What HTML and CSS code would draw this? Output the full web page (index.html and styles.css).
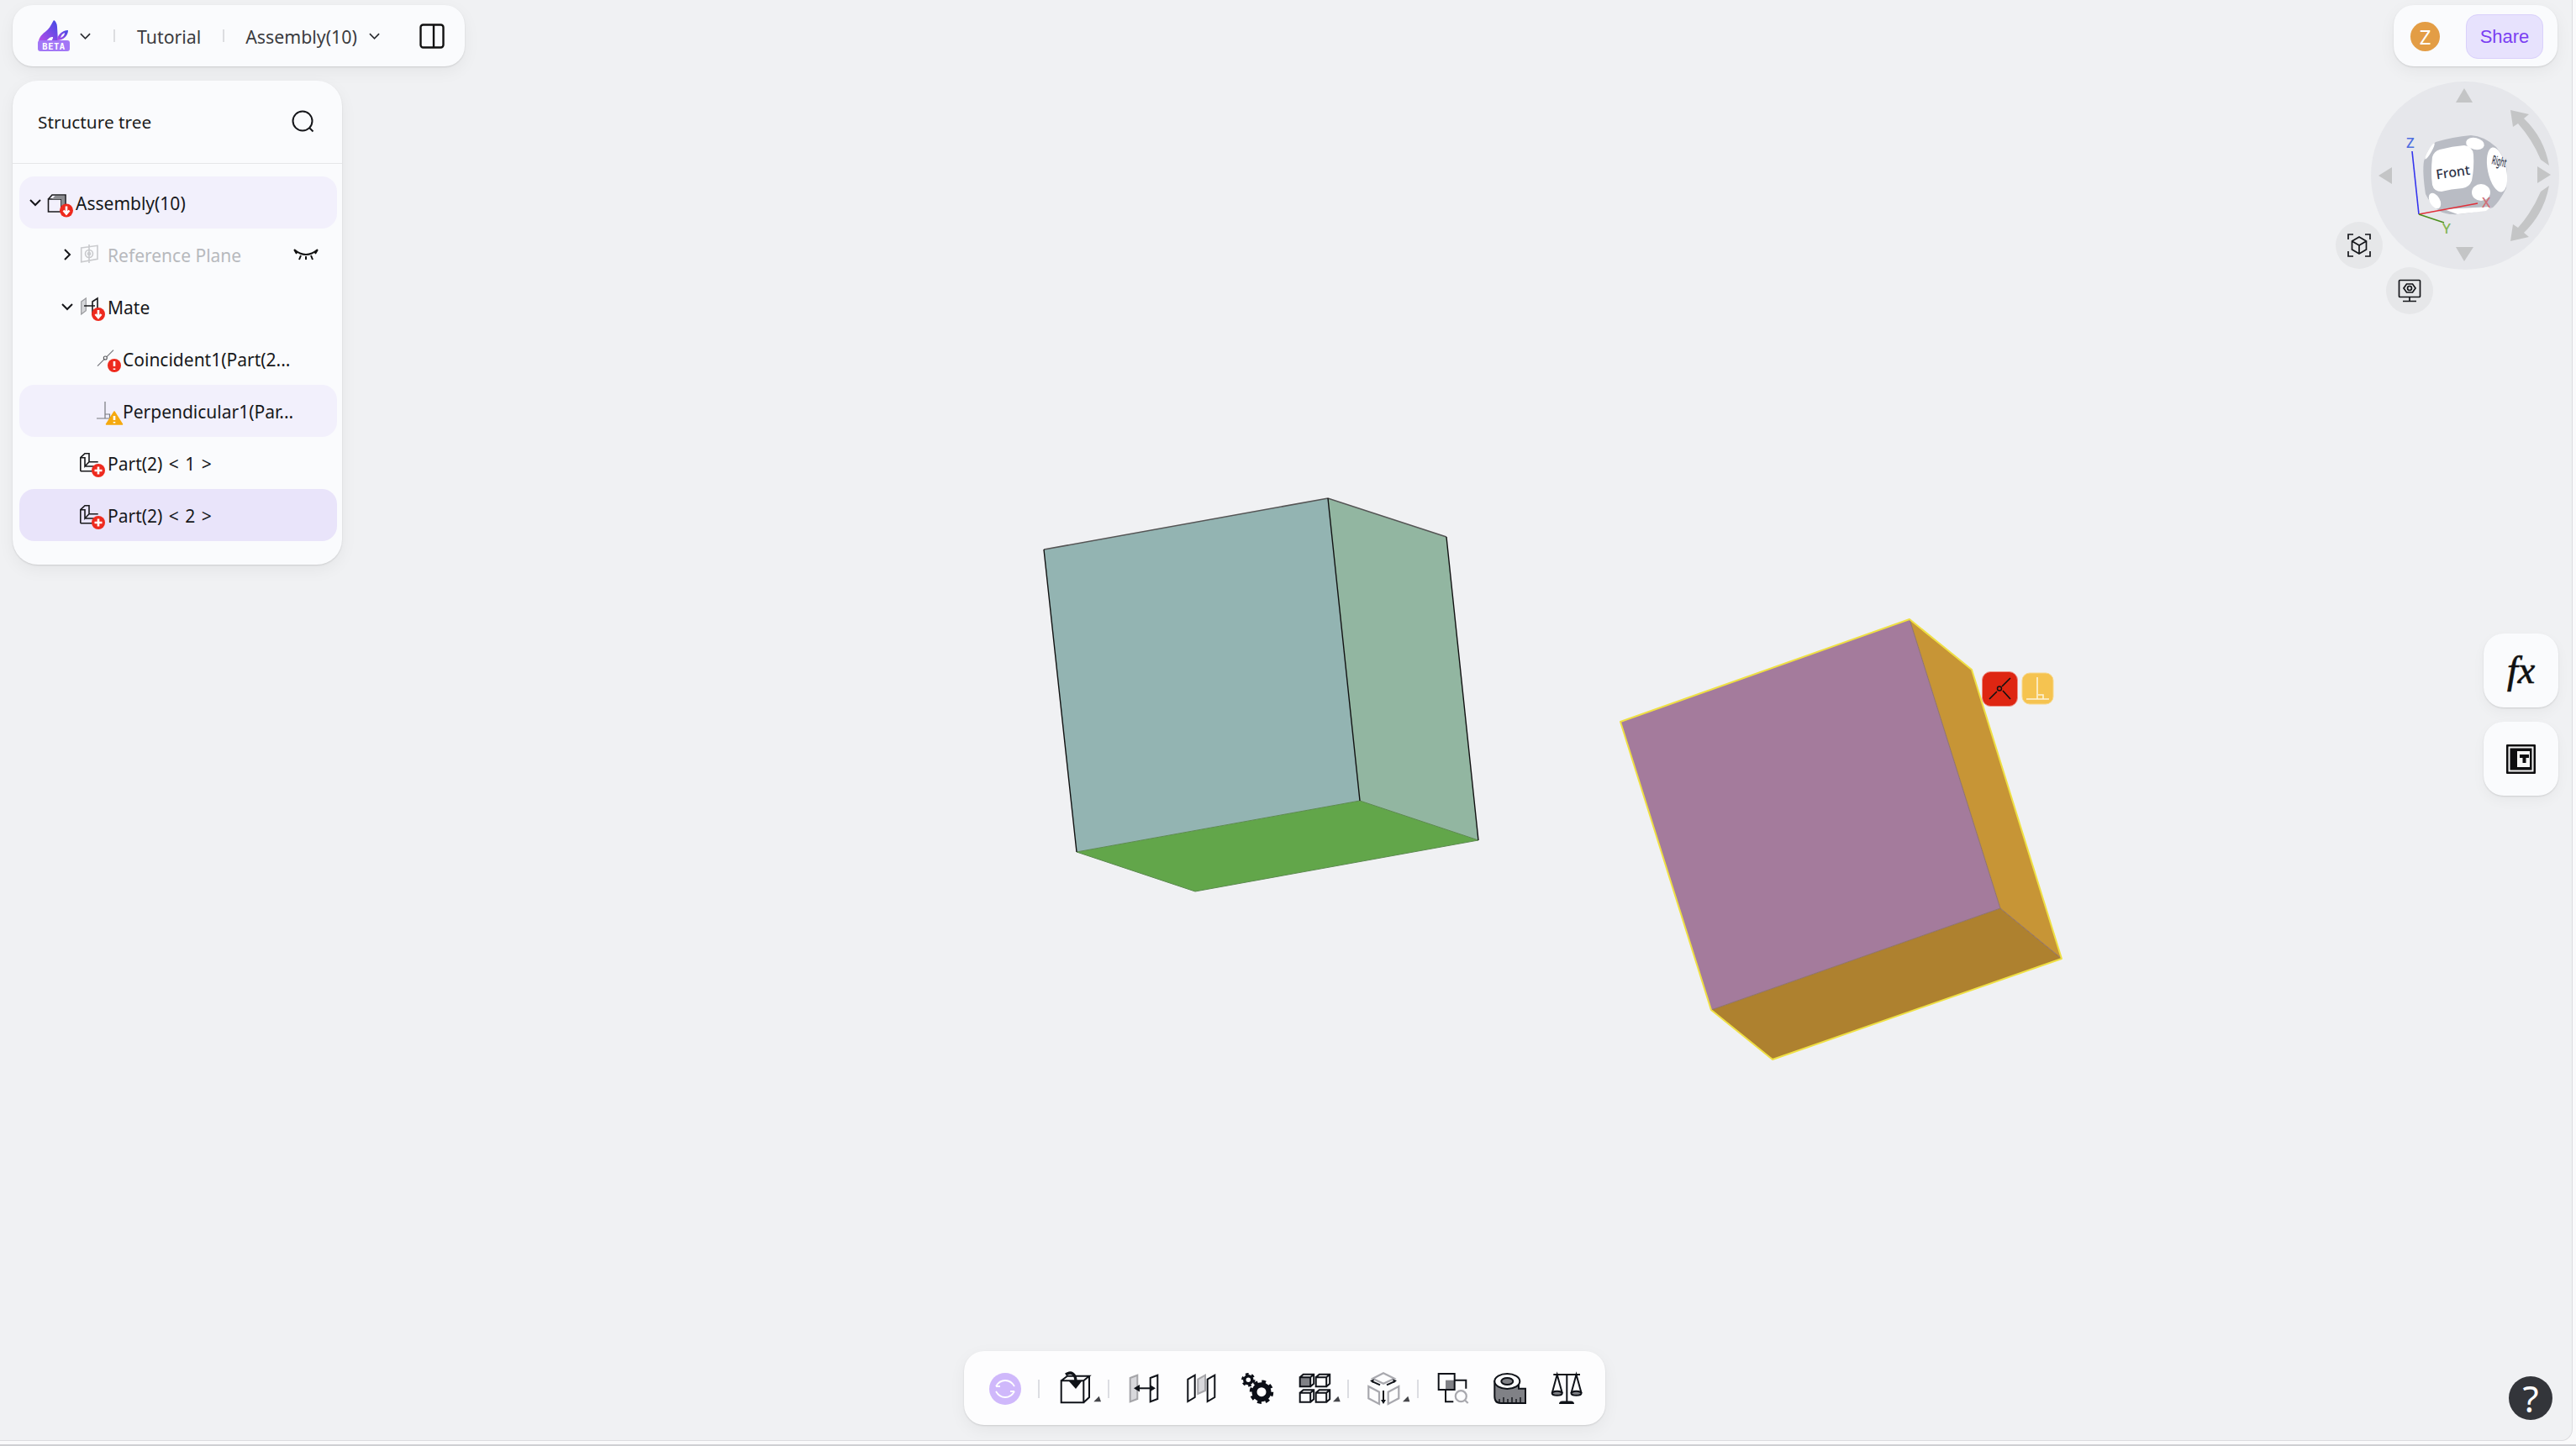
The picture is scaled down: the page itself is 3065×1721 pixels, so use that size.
FILE: index.html
```html
<!DOCTYPE html>
<html lang="en">
<head>
    <meta charset="UTF-8">
    <meta name="viewport" content="width=device-width, initial-scale=1.0">
    <title>Assembly(10)</title>
    <link rel="stylesheet" href="styles.css">
</head>
<body>
<div class="viewport">

    <!-- 3d scene: the two parts, the mate markers and the view cube -->
    <svg class="scene" viewBox="0 0 3065 1721">
        <g class="part-a">
            <polygon class="a-front" points="1242,654 1580,593 1618,953 1281,1014"/>
            <polygon class="a-right" points="1580,593 1721,639 1759,1000 1618,953"/>
            <polygon class="a-bottom" points="1281,1014 1618,953 1759,1000 1422,1061"/>
            <path class="a-top-edge" d="M1242 654L1580 593L1721 639"/>
            <path class="a-edge" d="M1242 654L1281 1014M1580 593L1618 953M1721 639L1759 1000"/>
        </g>
        <g class="part-b">
            <polygon class="b-front" points="1928,859 2272,737 2380,1081 2036,1202"/>
            <polygon class="b-right" points="2272,737 2346,797 2453,1141 2380,1081"/>
            <polygon class="b-bottom" points="2036,1202 2380,1081 2453,1141 2109,1261"/>
            <path class="b-inner" d="M2272 737L2380 1081L2036 1202M2380 1081L2453 1141"/>
            <path class="b-outline" d="M1928 859L2272 737L2346 797L2453 1141L2109 1261L2036 1202Z"/>
        </g>

        <rect class="mark-red" x="2358.5" y="799.5" width="42" height="41" rx="10"/>
        <path class="mark-red-lines" d="M2392 807L2382 817M2376 823L2367 832M2383 822L2392 832"/>
        <circle class="mark-red-dot" cx="2379" cy="819.5" r="2.5"/>
        <rect class="mark-yellow" x="2406" y="801" width="37" height="37" rx="9"/>
        <path class="mark-yellow-lines" d="M2424 806V832M2411 832H2438M2425 827H2431V832"/>

        <circle class="nav-disc" cx="2933" cy="209" r="112"/>
        <circle class="nav-disc-small" cx="2807" cy="292" r="28"/>
        <circle class="nav-disc-small" cx="2867" cy="346" r="28"/>
        <g class="nav-arrow">
            <polygon points="2932,105 2922,122 2942,122"/>
            <polygon points="2922,294 2943,294 2932,311"/>
            <polygon points="2846,199 2846,219 2830,209"/>
            <polygon points="3019,198 3019,218 3035,208"/>
            <path d="M2987 131L3009 136L3003 141Q3027 164 3033 197L3023 190Q3013 166 2996 147L2990 151Z"/>
            <path d="M2987 287L3009 282L3003 277Q3027 254 3033 221L3023 228Q3013 252 2996 271L2990 267Z"/>
        </g>

        <path class="cube-body" d="M2898 169Q2918 163 2940 161Q2956 162 2970 175Q2982 190 2983 205L2982 224Q2974 240 2966 247Q2946 253 2926 255Q2910 256 2902 251Q2890 240 2886 231Q2882 205 2884 192Q2888 177 2898 169Z"/>
        <g class="cube-spot">
            <path d="M2903 178Q2918 174 2932 173Q2942 174 2943 184Q2944 200 2941 215Q2938 223 2930 224Q2916 225 2905 228Q2896 228 2894 220Q2892 205 2894 187Q2896 180 2903 178Z"/>
            <ellipse cx="2971" cy="202" rx="11" ry="27" transform="rotate(-12 2971 202)"/>
            <ellipse cx="2945" cy="171" rx="11" ry="7" transform="rotate(12 2945 171)"/>
            <ellipse cx="2952" cy="229" rx="11" ry="10"/>
            <ellipse cx="2897" cy="239" rx="6" ry="10" transform="rotate(-30 2897 239)"/>
            <ellipse cx="2891" cy="180" rx="2" ry="11" transform="rotate(30 2891 180)"/>
            <path d="M2908 249L2964 246L2958 251L2924 255Z"/>
        </g>
        <text class="cube-front" x="2898" y="211" transform="rotate(-8 2916 204)">Front</text>
        <text class="cube-right" transform="translate(2964 195) rotate(14) scale(.62 1.35)">Right</text>
        <path class="axis-z" d="M2878 255L2870 180"/>
        <path class="axis-x" d="M2878 255L2948 242"/>
        <path class="axis-y" d="M2878 255L2908 265"/>
        <text class="label-z" x="2863" y="176">Z</text>
        <text class="label-x" x="2953" y="247">X</text>
        <text class="label-y" x="2906" y="278">Y</text>

        <g class="nav-icon">
            <path d="M2794 285v-6h6M2814 279h6v6M2820 299v6h-6M2800 305h-6v-6"/>
            <path d="M2807 282l8.500 5v10l-8.500 5l-8.500-5v-10zM2798.500 287l8.500 5l8.500-5M2807 292v10"/>
            <rect x="2854.500" y="333.500" width="25" height="20" rx="1"/>
            <path d="M2867 353v6M2859 358.500h16"/>
            <path d="M2860 343l3.500-5h7l3.500 5l-3.500 5h-7z"/>
            <circle cx="2867" cy="343" r="2.500"/>
        </g>
    </svg>

    <div class="left-col">
        <header class="topbar">
            <svg class="logo" viewBox="0 0 38 37">
                <defs>
                    <linearGradient id="logoGrad" x1="0" y1="1" x2="1" y2="0">
                        <stop offset="0" stop-color="#b64de8"/>
                        <stop offset="1" stop-color="#3f49e4"/>
                    </linearGradient>
                </defs>
                <path fill="url(#logoGrad)" d="M19 0C21 1 23 4 23 8L24 25H16C18 22 19 20 17 20C13 20 12 24 9 25H1C2 18 8 15 12 11C15 8 17 3 19 0Z"/>
                <path fill="url(#logoGrad)" d="M23 24C23 18 29 12 36 12C36 18 31 24 23 24ZM27 21C30 20 32 18 32 15C29 16 28 18 27 21Z"/>
                <rect x="0" y="24" width="38" height="13" rx="3" fill="#a277f6"/>
                <text class="logo-text" x="19" y="34.500">BETA</text>
            </svg>
            <svg class="chev chev-logo" viewBox="0 0 14 8"><path d="M1 1l6 6l6-6"/></svg>
            <span class="bar-sep bar-sep-a"></span>
            <span class="bar-text bar-tutorial">Tutorial</span>
            <span class="bar-sep bar-sep-b"></span>
            <span class="bar-text bar-assembly">Assembly(10)</span>
            <svg class="chev chev-doc" viewBox="0 0 14 8"><path d="M1 1l6 6l6-6"/></svg>
            <svg class="panel-toggle" viewBox="0 0 30 30">
                <rect x="1.500" y="1.500" width="27" height="27" rx="3"/>
                <path d="M17 1.500V28.500"/>
            </svg>
        </header>

        <aside class="tree">
            <div class="tree-head">
                <span class="tree-title">Structure tree</span>
                <svg class="tree-search" viewBox="0 0 28 28">
                    <circle cx="13" cy="13" r="11.500"/>
                    <path d="M21 21l4.500 4.500"/>
                </svg>
            </div>
            <div class="tree-body">
                <div class="row lv0 hover">
                    <svg class="caret" viewBox="0 0 20 20"><path d="M4 7l6 6l6-6"/></svg>
                    <svg class="node" viewBox="0 0 34 34">
                        <path class="ln" d="M1.500 13L6 8H22V24L17 28M1.500 13H17V28H1.500Z"/>
                        <path class="gray" d="M6 13L9.500 9H21V22L17 25V13Z"/>
                        <circle class="bad" cx="23" cy="26.500" r="8"/>
                        <path class="w" d="M23 21.500v8M19.500 26.500l3.500 4l3.500-4"/>
                    </svg>
                    <span class="label">Assembly(10)</span>
                </div>
                <div class="row lv1 muted">
                    <svg class="caret" viewBox="0 0 20 20"><path d="M7 4l6 6l-6 6"/></svg>
                    <svg class="node" viewBox="0 0 34 34">
                        <path class="pale" d="M2.700 9L22 6.300V22.300L2.700 25.700ZM12 5V27"/>
                        <circle class="pale" cx="12" cy="16" r="4.500"/>
                        <circle class="pale" cx="12" cy="16" r="1.500"/>
                    </svg>
                    <span class="label">Reference Plane</span>
                    <svg class="eye" viewBox="0 0 30 16">
                        <path d="M1 2Q15 14 29 2M1 2l3 5M29 2l-3 5M9 9l-2 5M21 9l2 5M15 10v4"/>
                    </svg>
                </div>
                <div class="row lv1">
                    <svg class="caret" viewBox="0 0 20 20"><path d="M4 7l6 6l6-6"/></svg>
                    <svg class="node" viewBox="0 0 34 34">
                        <path class="plane" d="M2.700 11L8.300 7V21.700L2.700 26Z"/>
                        <path class="ln" d="M16 11L22 7V21.700L16 26ZM6 16H19"/>
                        <circle class="bad" cx="23" cy="26" r="8"/>
                        <path class="w" d="M23 21v8M19.500 26l3.500 4l3.500-4"/>
                    </svg>
                    <span class="label">Mate</span>
                </div>
                <div class="row lv2">
                    <span class="caret"></span>
                    <svg class="node" viewBox="0 0 34 34">
                        <path class="thin" d="M4 25.700L23 6.700"/>
                        <circle class="dot" cx="13.300" cy="16" r="2"/>
                        <circle class="bad" cx="24" cy="25" r="8"/>
                        <path class="w" d="M24 20v6M24 28.500v1.500"/>
                    </svg>
                    <span class="label">Coincident1(Part(2...</span>
                </div>
                <div class="row lv2 hover">
                    <span class="caret"></span>
                    <svg class="node" viewBox="0 0 34 34">
                        <path class="thin" d="M13 6V26M3 26H19M13 21H18.500V26"/>
                        <path class="warn" d="M24 18L33.500 33H14.500Z"/>
                        <path class="w" d="M24 23v5M24 30v1.500"/>
                    </svg>
                    <span class="label">Perpendicular1(Par...</span>
                </div>
                <div class="row lv1">
                    <span class="caret"></span>
                    <svg class="node" viewBox="0 0 34 34">
                        <path class="ln" d="M1.800 26.700V10.700L7 5.700H12V15.700H22.700M1.800 10.700H7V21L12 15.700M7 21H20M1.800 26.700H20"/>
                        <circle class="bad" cx="23" cy="26" r="8"/>
                        <path class="w" d="M23 21.500v9M18.500 26h9"/>
                    </svg>
                    <span class="label spaced">Part(2) &lt; 1 &gt;</span>
                </div>
                <div class="row lv1 selected">
                    <span class="caret"></span>
                    <svg class="node" viewBox="0 0 34 34">
                        <path class="ln" d="M1.800 26.700V10.700L7 5.700H12V15.700H22.700M1.800 10.700H7V21L12 15.700M7 21H20M1.800 26.700H20"/>
                        <circle class="bad" cx="23" cy="26" r="8"/>
                        <path class="w" d="M23 21.500v9M18.500 26h9"/>
                    </svg>
                    <span class="label spaced">Part(2) &lt; 2 &gt;</span>
                </div>
            </div>
        </aside>
    </div>

    <div class="user-bar">
        <span class="avatar">Z</span>
        <button class="share" type="button">Share</button>
    </div>

    <div class="side-tools">
        <div class="side-btn"><span class="fx">fx</span></div>
        <div class="side-btn">
            <svg class="side-icon" viewBox="0 0 35 35">
                <rect class="si-black" x="0" y="0" width="35" height="35" rx="1"/>
                <path class="si-white" d="M3.500 3.500H31.500V31.500H3.500Z"/>
                <path class="si-fill" d="M13 8H28V27H13Z"/>
                <path class="si-t" d="M16 12H27V16H23.500V22H19.500V16H16Z"/>
            </svg>
        </div>
    </div>

    <div class="toolbar">
        <svg class="sync" viewBox="0 0 38 38">
            <circle class="sync-bg" cx="19" cy="19" r="19"/>
            <path class="sync-arc" d="M8 16Q12 9 19 9Q26 9 30 16M8 22Q12 29 19 29Q26 29 30 22"/>
            <path class="sync-arc" d="M8 16L13 16M30 22L25 22"/>
        </svg>
        <span class="sep sep-first"></span>
        <svg class="tool tool-import" viewBox="0 0 54 48">
            <path class="st2" d="M5.700 14.300H32.300V40.300H5.700ZM5.700 14.300L13 8.700H39L32.300 14.300M39 8.700V34L32.300 40.300"/>
            <path class="st3" d="M11 7C17 3 23 5 23 16"/>
            <path class="fk" d="M15 15H30L23 24Z"/>
            <path class="tri" d="M53 39.300H44.300L50.700 32.700Z"/>
        </svg>
        <span class="sep"></span>
        <svg class="tool" viewBox="0 0 68 48">
            <path class="gp" d="M7.700 11L16.300 7.700V36L7.700 39.300Z" transform="translate(10 0)"/>
            <path class="st2" d="M41.700 11L50.300 7.700V36L41.700 39.300Z"/>
            <path class="st2" d="M24 23.300H46"/>
            <path class="fk" d="M22 23.300L29 19V27.500ZM48 23.300L41 19V27.500Z"/>
        </svg>
        <svg class="tool" viewBox="0 0 68 48">
            <path class="st2" d="M18.300 12.700L26.700 7.700V34L18.300 39Z"/>
            <path class="gp" d="M30.300 12.700L39 7.700V26L30.300 30Z"/>
            <path class="st2" d="M41.700 12.700L50.300 7.700V34L41.700 39Z"/>
        </svg>
        <svg class="tool" viewBox="0 0 68 48">
            <circle class="gear" cx="38" cy="27.700" r="8.500"/>
            <circle class="gear-t" cx="38" cy="27.700" r="12.500"/>
            <circle class="gear-s" cx="22.300" cy="13.300" r="4.500"/>
            <circle class="gear-st" cx="22.300" cy="13.300" r="7"/>
        </svg>
        <svg class="tool tool-grid" viewBox="0 0 65 48">
            <path class="fg" d="M15.700 10.300h12.500v11h-12.500z"/>
            <path class="st2" d="M15.700 10.300h12.500v11h-12.500zl4-3.500h12.500v11l-4 3.500m0-11l4-3.500"/>
            <path class="st2" d="M34.700 10.300h12.500v11h-12.500zl4-3.500h12.500v11l-4 3.500m0-11l4-3.500"/>
            <path class="st2" d="M15.700 28.700h12.500v11h-12.500zl4-3.500h12.500v11l-4 3.500m0-11l4-3.500"/>
            <path class="st2" d="M34.700 28.700h12.500v11h-12.500zl4-3.500h12.500v11l-4 3.500m0-11l4-3.500"/>
            <path class="tri" d="M63.700 39.300H55L61.300 32.700Z"/>
        </svg>
        <span class="sep"></span>
        <svg class="tool tool-explode" viewBox="0 0 67 48">
            <path class="sg" d="M34 5.300L47 11.700L34 17.700L21.300 11.700Z"/>
            <path class="sg" d="M16.300 21L29 27.700V42L16.300 35.300Z"/>
            <path class="sg" d="M39.700 27.700L52.300 21V35.300L39.700 42Z"/>
            <path class="st2" d="M30 19.300L20 14.800M38 19.300L48 14.800M34 26V39"/>
            <path class="fk" d="M18 14L23 12.500L21.500 17ZM50 14L45 12.500L46.500 17ZM34 42L31 37H37Z"/>
            <path class="tri" d="M65.300 39.300H57L63.300 32.700Z"/>
        </svg>
        <span class="sep"></span>
        <svg class="tool" viewBox="0 0 68 48">
            <rect class="fg" x="25" y="13.700" width="10.700" height="11.300"/>
            <rect class="st2" x="16.700" y="6" width="19" height="19"/>
            <path class="st2" d="M35.700 13.700H49.300V23.700M25 25V39.300H34.300"/>
            <circle class="sg" cx="43.300" cy="32.700" r="6.500"/>
            <path class="sg" d="M48 37.500L51.700 41"/>
        </svg>
        <svg class="tool" viewBox="0 0 68 48">
            <path class="fg st2" d="M15.300 15V33Q15.300 41 23 41H52V23.700H44V15Z"/>
            <ellipse class="st2 wh" cx="30.300" cy="15" rx="15" ry="9"/>
            <ellipse class="st2 fg" cx="30.300" cy="15" rx="7" ry="4"/>
            <path class="st1" d="M21 36V41M26 34V41M31 36V41M36 34V41M41 36V41M46 34V41"/>
        </svg>
        <svg class="tool" viewBox="0 0 68 48">
            <path class="st2" d="M17.300 7H49M33.300 7V39"/>
            <path class="st2" d="M21.700 7L16 28H27.500ZM44.500 7L38.800 28H50.300Z"/>
            <ellipse class="fg st2" cx="21.700" cy="29.300" rx="6" ry="2.500"/>
            <ellipse class="fg st2" cx="44.500" cy="29.300" rx="6" ry="2.500"/>
            <path class="fk" d="M24 42Q24 38.500 28 38.500H38Q42 38.500 42 42Z"/>
        </svg>
    </div>

    <div class="help">?</div>
</div>
</body>
</html>
```

FILE: styles.css
```css
* {
    margin: 0;
    padding: 0;
    box-sizing: border-box;
    font-family: "Noto Sans", sans-serif;
}

html, body {
    width: 3065px;
    height: 1721px;
    overflow: hidden;
    background: #fafafb;
}

body {
    border-bottom: 2px solid #cfd0d3;
}

.viewport {
    position: relative;
    width: 3061px;
    height: 1715px;
    background: #f0f1f3;
    border-right: 1px solid #dcdcdf;
    border-bottom: 1px solid #dcdcdf;
    border-bottom-right-radius: 14px;
    overflow: hidden;
}

.scene {
    position: absolute;
    left: 0;
    top: 0;
    width: 3065px;
    height: 1721px;
}

/* parts */
.a-front { fill: #93b4b2; }
.a-right { fill: #92b6a1; }
.a-bottom { fill: #62a64a; stroke: #5c8a50; stroke-width: 1; }
.a-edge { stroke: #111; stroke-width: 1.4; fill: none; }
.a-top-edge { stroke: #555; stroke-width: 1.6; fill: none; }

.b-front { fill: #a47b9c; }
.b-right { fill: #c79536; }
.b-bottom { fill: #ae812f; }
.b-inner { stroke: #8d7170; stroke-width: 1; fill: none; }
.b-outline { stroke: #efe044; stroke-width: 2; fill: none; stroke-linejoin: round; }

.mark-red { fill: #de2612; stroke: #ef8f85; stroke-width: 1; }
.mark-red-lines { stroke: #111; stroke-width: 1.6; fill: none; }
.mark-red-dot { fill: none; stroke: #111; stroke-width: 1.4; }
.mark-yellow { fill: #f5c350; stroke: #f8d88a; stroke-width: 1; }
.mark-yellow-lines { stroke: #fdf3d8; stroke-width: 1.6; fill: none; }

/* view cube */
.nav-disc { fill: #e6e7eb; }
.nav-disc-small { fill: #e6e7e9; }
.nav-arrow { fill: #c4c5c6; }
.cube-body { fill: #b9bcc4; }
.cube-spot { fill: #fff; }
.cube-front {
    font-size: 16px;
    font-weight: 500;
    fill: #2d3347;
}
.cube-right {
    font-size: 11px;
    font-weight: 500;
    fill: #2d3347;
}
.axis-z, .axis-x, .axis-y { fill: none; stroke-width: 1.6; }
.axis-z { stroke: #3434ee; }
.axis-x { stroke: #e0303a; }
.axis-y { stroke: #4b8f1c; }
.label-z, .label-x, .label-y { font-size: 17px; font-weight: 500; }
.label-z { fill: #4f6fe0; }
.label-x { fill: #d07078; }
.label-y { fill: #84b552; }
.nav-icon { fill: none; stroke: #14161a; stroke-width: 1.7; }

/* left column */
.left-col {
    position: relative;
    width: 392px;
    margin-left: 15px;
    padding-top: 6px;
}

.topbar {
    display: flex;
    align-items: center;
    width: 538px;
    height: 73px;
    padding-left: 30px;
    background: #fafbfd;
    border-radius: 24px;
    box-shadow: 0 1px 2px rgba(0, 0, 0, .12), 0 6px 20px rgba(0, 0, 0, .05);
}

.logo {
    width: 38px;
    height: 37px;
    flex: none;
}

.logo-text {
    font-family: "DejaVu Sans Mono", monospace;
    font-size: 10.5px;
    font-weight: 700;
    fill: #fff;
    text-anchor: middle;
    letter-spacing: .5px;
}

.chev {
    width: 13px;
    height: 8px;
    flex: none;
    fill: none;
    stroke: #2b2d31;
    stroke-width: 1.8;
}

.chev-logo { margin-left: 12px; }
.chev-doc { margin-left: 14px; }

.bar-sep {
    width: 2px;
    height: 15px;
    background: #dcdde0;
    flex: none;
}

.bar-sep-a { margin-left: 27px; }
.bar-sep-b { margin-left: 26px; }

.bar-text {
    padding-top: 2px;
    font-size: 21.3px;
    color: #3a3b3f;
    white-space: nowrap;
}

.bar-tutorial { margin-left: 26px; }
.bar-assembly { margin-left: 25px; }

.panel-toggle {
    width: 30px;
    height: 30px;
    margin-left: 47px;
    fill: none;
    stroke: #111;
    stroke-width: 2.4;
    flex: none;
}

/* structure tree */
.tree {
    width: 392px;
    margin-top: 17px;
    background: #fafbfd;
    border-radius: 30px;
    box-shadow: 0 1px 2px rgba(0, 0, 0, .12), 0 6px 20px rgba(0, 0, 0, .05);
}

.tree-head {
    display: flex;
    align-items: center;
    justify-content: space-between;
    height: 99px;
    padding: 0 32px 0 30px;
    border-bottom: 1px solid #e6e7e9;
    font-size: 21px;
    color: #1c1d20;
}

.tree-title {
    font-size: 20.8px;
}

.tree-search {
    width: 28px;
    height: 28px;
    fill: none;
    stroke: #15161a;
    stroke-width: 2;
}

.tree-body {
    padding: 15px 6px 28px 8px;
}

.row {
    display: flex;
    align-items: center;
    height: 62px;
    border-radius: 18px;
    font-size: 21px;
    color: #17181b;
}

.lv0 { padding-left: 13px; }
.lv1 { padding-left: 51px; }
.lv2 { padding-left: 69px; }

.hover { background: #f2f0fc; }
.selected { background: #e9e4fa; }
.muted { color: #b7b9bd; }

.caret {
    width: 20px;
    height: 20px;
    margin: 0 4px 0 -4px;
    flex: none;
    fill: none;
    stroke: #15161a;
    stroke-width: 2;
}

.node {
    width: 34px;
    height: 34px;
    flex: none;
    overflow: visible;
}

.label {
    padding-top: 2px;
    white-space: nowrap;
}

.spaced { word-spacing: 2px; }

.eye {
    width: 30px;
    height: 16px;
    margin-left: 62px;
    fill: none;
    stroke: #111;
    stroke-width: 2;
    flex: none;
}

.node .ln { fill: none; stroke: #1a1a1c; stroke-width: 1.6; }
.node .gray { fill: #8b8c90; }
.node .pale { fill: none; stroke: #c9cacd; stroke-width: 1.6; }
.node .plane { fill: #d5d6d9; stroke: #9a9b9f; stroke-width: 1.2; }
.node .thin { fill: none; stroke: #77787d; stroke-width: 1.2; }
.node .dot { fill: #fafbfd; stroke: #55565a; stroke-width: 1.1; }
.node .bad { fill: #ee2a1e; }
.node .warn { fill: #f5a90f; stroke: #f5a90f; stroke-width: 1.5; stroke-linejoin: round; }
.node .w { fill: none; stroke: #fff; stroke-width: 2.6; }

/* top right */
.user-bar {
    position: absolute;
    left: 2848px;
    top: 6px;
    display: flex;
    align-items: center;
    width: 195px;
    height: 73px;
    padding: 0 17px 0 20px;
    background: #fafbfd;
    border-radius: 24px;
    box-shadow: 0 1px 2px rgba(0, 0, 0, .12), 0 6px 20px rgba(0, 0, 0, .05);
}

.avatar {
    display: flex;
    align-items: center;
    justify-content: center;
    width: 35px;
    height: 35px;
    margin-top: 2px;
    border-radius: 50%;
    background: #e39d45;
    color: #fff;
    font-size: 24px;
}

.share {
    width: 92px;
    height: 53px;
    margin-left: auto;
    margin-top: 2px;
    border: 1px solid #d9d0fb;
    border-radius: 14px;
    background: #e7e2fd;
    color: #7a3ff2;
    font-family: "Liberation Sans", sans-serif;
    font-size: 22px;
}

/* right side buttons */
.side-tools {
    position: absolute;
    left: 2955px;
    top: 754px;
    display: flex;
    flex-direction: column;
    gap: 17px;
}

.side-btn {
    display: flex;
    align-items: center;
    justify-content: center;
    width: 89px;
    height: 88px;
    background: #fafbfd;
    border-radius: 24px;
    box-shadow: 0 1px 2px rgba(0, 0, 0, .12), 0 6px 16px rgba(0, 0, 0, .04);
}

.fx {
    font-family: "Liberation Serif", serif;
    font-style: italic;
    font-size: 46px;
    color: #111;
    line-height: 1;
    -webkit-text-stroke: .7px #111;
}

.side-icon { width: 35px; height: 35px; }
.si-black { fill: #0d0d0f; }
.si-white { fill: none; stroke: #f5f5f5; stroke-width: 2; }
.si-fill { fill: #f5f5f5; }
.si-t { fill: #0d0d0f; }

/* bottom toolbar */
.toolbar {
    position: absolute;
    left: 1147px;
    top: 1608px;
    display: flex;
    align-items: center;
    width: 763px;
    height: 88px;
    padding: 2px 0 0 30px;
    background: #fdfdfe;
    border-radius: 24px;
    box-shadow: 0 1px 2px rgba(0, 0, 0, .12), 0 6px 20px rgba(0, 0, 0, .05);
}

.sync {
    width: 38px;
    height: 38px;
    flex: none;
}

.sync-bg { fill: #cfb8fb; }
.sync-arc { fill: none; stroke: #fff; stroke-width: 1.8; }

.sep {
    width: 2px;
    height: 22px;
    margin: 0 7px;
    background: #dcdde2;
    flex: none;
}

.sep-first { margin: 0 20px; }

.tool {
    width: 68px;
    height: 48px;
    flex: none;
}

.tool-import { width: 54px; }
.tool-grid { width: 65px; }
.tool-explode { width: 67px; }

.tool .st1, .tool .st2, .tool .st3, .tool .sg { fill: none; }
.tool .st1 { stroke: #0f1218; stroke-width: 1.4; }
.tool .st2 { stroke: #0f1218; stroke-width: 2; }
.tool .st3 { stroke: #0f1218; stroke-width: 3.4; fill: none; }
.tool .sg { stroke: #a8a8ae; stroke-width: 2.2; }
.tool .gp { fill: #d8d8dc; stroke: #a5a5a9; stroke-width: 2; }
.tool .fk { fill: #0f1218; }
.tool .fg { fill: #808186; }
.tool .wh { fill: #fdfdfe; }
.tool .tri { fill: #44454a; }
.tool .gear { fill: none; stroke: #0b0e16; stroke-width: 6; }
.tool .gear-t { fill: none; stroke: #0b0e16; stroke-width: 3.5; stroke-dasharray: 4.9 4.9; }
.tool .gear-s { fill: none; stroke: #0b0e16; stroke-width: 3.5; }
.tool .gear-st { fill: none; stroke: #0b0e16; stroke-width: 2.5; stroke-dasharray: 3.7 3.65; }

.help {
    position: absolute;
    left: 2985px;
    top: 1638px;
    display: flex;
    align-items: center;
    justify-content: center;
    width: 52px;
    height: 52px;
    border-radius: 50%;
    background: #33353a;
    color: #fff;
    font-size: 44px;
    line-height: 1;
}
```
